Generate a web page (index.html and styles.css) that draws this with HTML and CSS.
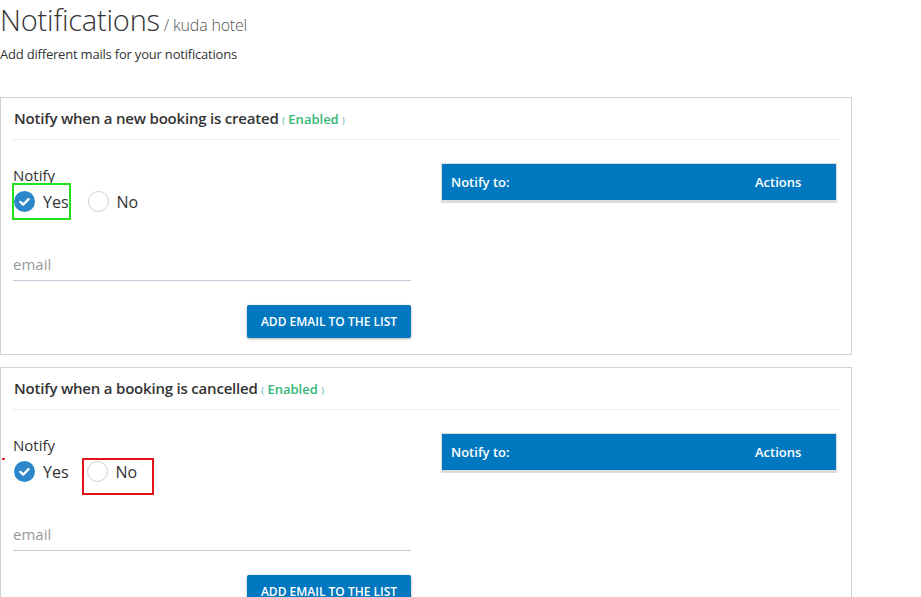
FILE: index.html
```html
<!DOCTYPE html>
<html>
<head>
<meta charset="utf-8">
<link rel="stylesheet" href="styles.css">
</head>
<body>
<div class="page">
  <h1 class="title">Notifications<span class="sub"> / kuda hotel</span></h1>
  <p class="lead">Add different mails for your notifications</p>

  <section class="card">
    <div class="card-head"><h2>Notify when a new booking is created <span class="status"><span class="paren">(</span> Enabled <span class="paren">)</span></span></h2></div>
    <div class="card-body">
      <div class="col-left">
        <div class="field-label">Notify</div>
        <div class="radios">
          <label class="radio hl-green"><span class="dot">
            <svg width="21" height="21" viewBox="0 0 21 21"><circle cx="10.5" cy="10.5" r="10.5" fill="#2b87c9"/><path d="M6.3 10.9 L9.2 13.6 L14.6 8.1" fill="none" stroke="#fff" stroke-width="2.3" stroke-linecap="round" stroke-linejoin="round"/></svg>
          </span>Yes</label>
          <label class="radio"><span class="dot">
            <svg width="21" height="21" viewBox="0 0 21 21"><circle cx="10.5" cy="10.5" r="10" fill="#fff" stroke="#cfcfcf" stroke-width="1"/></svg>
          </span>No</label>
        </div>
        <input class="email" type="text" placeholder="email">
        <div class="actions"><button class="btn">ADD EMAIL TO THE LIST</button></div>
      </div>
      <div class="col-right">
        <div class="table-head"><span class="th-main">Notify to:</span><span class="th-act">Actions</span></div>
      </div>
    </div>
  </section>

  <section class="card">
    <span class="mark"></span>
    <div class="card-head"><h2>Notify when a booking is cancelled <span class="status"><span class="paren">(</span> Enabled <span class="paren">)</span></span></h2></div>
    <div class="card-body">
      <div class="col-left">
        <div class="field-label">Notify</div>
        <div class="radios">
          <label class="radio"><span class="dot">
            <svg width="21" height="21" viewBox="0 0 21 21"><circle cx="10.5" cy="10.5" r="10.5" fill="#2b87c9"/><path d="M6.3 10.9 L9.2 13.6 L14.6 8.1" fill="none" stroke="#fff" stroke-width="2.3" stroke-linecap="round" stroke-linejoin="round"/></svg>
          </span>Yes</label>
          <label class="radio hl-red"><span class="dot">
            <svg width="21" height="21" viewBox="0 0 21 21"><circle cx="10.5" cy="10.5" r="10" fill="#fff" stroke="#cfcfcf" stroke-width="1"/></svg>
          </span>No</label>
        </div>
        <input class="email" type="text" placeholder="email">
        <div class="actions"><button class="btn">ADD EMAIL TO THE LIST</button></div>
      </div>
      <div class="col-right">
        <div class="table-head"><span class="th-main">Notify to:</span><span class="th-act">Actions</span></div>
      </div>
    </div>
  </section>
</div>
</body>
</html>
```

FILE: styles.css
```css
* { box-sizing: border-box; }
html, body { margin: 0; padding: 0; background: #fff; }
body {
  font-family: "Open Sans", "Liberation Sans", sans-serif;
  color: #333;
  overflow: hidden;
}
.page { width: 852px; }
.title {
  margin: 0;
  font-size: 29px;
  line-height: 40px;
  font-weight: 300;
  color: #333;
  letter-spacing: -0.2px;
}
.title .sub {
  font-size: 16px;
  font-weight: 300;
  color: #555;
  letter-spacing: -0.2px;
}
.lead {
  margin: 0 0 34px;
  font-size: 13px;
  line-height: 18px;
  color: #333;
  letter-spacing: -0.2px;
}
.card {
  position: relative;
  border: 1px solid #d2d2d2;
  margin-bottom: 12px;
}
.mark {
  position: absolute;
  left: 1px;
  top: 90px;
  width: 3px;
  height: 2px;
  background: #e00;
  border-radius: 1px;
}
.card-head { padding: 0 12px; }
.card-head h2 {
  margin: 0;
  height: 42px;
  line-height: 40px;
  font-size: 15px;
  font-weight: 600;
  color: #333;
  border-bottom: 1px solid #ececec;
  width: 826px;
  padding-left: 1px;
  letter-spacing: -0.2px;
}
.status {
  color: #35b77b;
  font-size: 13px;
  font-weight: 600;
  letter-spacing: 0;
}
.status .paren { font-size: 9px; font-weight: 400; color: #5aa; }
.card-body {
  display: grid;
  grid-template-columns: 398px 396px;
  column-gap: 30px;
  padding: 24px 12px 16px;
}
.field-label {
  margin-top: 1px;
  font-size: 15px;
  line-height: 20px;
  color: #333;
}
.radios {
  display: flex;
  gap: 18px;
  height: 33px;
  align-items: center;
}
.radio {
  display: inline-flex;
  align-items: center;
  gap: 8px;
  height: 33px;
  font-size: 16px;
  color: #333;
  margin-left: 1px;
}
.radio .dot { display: inline-flex; width: 21px; height: 21px; }
.hl-green { outline: 2px solid #22e01c; }
.hl-red {
  outline: 2px solid #e2121b;
  align-self: flex-start;
  padding: 0 15px 10px 3px;
  margin-left: -3px;
  height: 33px;
  margin-top: 5px;
}
.email {
  display: block;
  width: 100%;
  margin-top: 22px;
  height: 41px;
  padding: 7px 0 0;
  border: 0;
  border-bottom: 1px solid #c4cad8;
  font-family: inherit;
  font-size: 15px;
  color: #333;
  outline: none;
  background: transparent;
}
.email::placeholder { color: #9a9a9a; }
.actions {
  display: flex;
  justify-content: flex-end;
  margin-top: 24px;
}
.btn {
  height: 33px;
  width: 164px;
  padding: 0;
  border: 0;
  border-radius: 2px;
  background: #0078bf;
  color: #fff;
  font-family: inherit;
  font-size: 12px;
  font-weight: 600;
  box-shadow: 0 1px 3px rgba(0,0,0,0.3);
}
.table-head {
  display: flex;
  align-items: center;
  height: 40px;
  margin-top: -1px;
  background: #0078bf;
  border: 1px solid #dcdcdc;
  border-bottom-width: 3px;
  color: #fff;
  font-size: 13px;
  font-weight: 600;
}
.th-main { flex: 1; padding-left: 9px; }
.th-act { width: 81px; }
```
